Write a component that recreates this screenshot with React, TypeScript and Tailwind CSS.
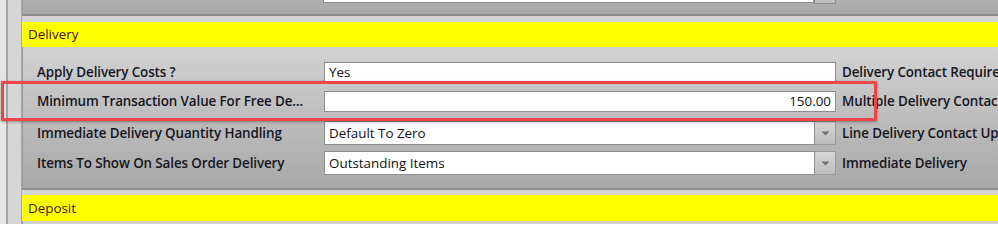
const font = { fontFamily: '"Open Sans", "Noto Sans", sans-serif' };

type Row = {
  label: string;
  value: string;
  right: string;
  align?: "left" | "right";
  dropdown?: boolean;
  h: string;
  mt: string;
};

const rows: Row[] = [
  { label: "Apply Delivery Costs ?", value: "Yes", right: "Delivery Contact Required", h: "h-[21px]", mt: "mt-0" },
  { label: "Minimum Transaction Value For Free De...", value: "150.00", right: "Multiple Delivery Contacts", align: "right", h: "h-[21px]", mt: "mt-[8px]" },
  { label: "Immediate Delivery Quantity Handling", value: "Default To Zero", right: "Line Delivery Contact Update", dropdown: true, h: "h-[24px]", mt: "mt-[9px]" },
  { label: "Items To Show On Sales Order Delivery", value: "Outstanding Items", right: "Immediate Delivery", dropdown: true, h: "h-[24px]", mt: "mt-[6px]" },
];

function DropButton({ className = "" }: { className?: string }) {
  return (
    <div
      className={`flex w-[21px] shrink-0 items-center justify-center border border-[#9a9a9a] bg-gradient-to-b from-[#d6d6d6] to-[#bdbdbd] ${className}`}
    >
      <svg width="9" height="5" viewBox="0 0 9 5">
        <path d="M0.5 0.5 L8.5 0.5 L4.5 4.5 Z" fill="#707070" />
      </svg>
    </div>
  );
}

function FieldRow({ row }: { row: Row }) {
  return (
    <div className={`flex items-center ${row.h} ${row.mt}`}>
      <div className="w-[301px] shrink-0 pl-[14px] text-[13.4px] font-semibold tracking-[-0.1px] whitespace-nowrap text-[#15151f]">
        {row.label}
      </div>
      <div className="flex h-full w-[512px] shrink-0">
        <div
          className={`flex h-full flex-1 items-center border border-[#8e8e8e] bg-white px-[4px] text-[13.4px] text-[#111] ${
            row.align === "right" ? "justify-end" : ""
          }`}
        >
          {row.value}
        </div>
        {row.dropdown && <DropButton className="border-l-0" />}
      </div>
      <div className="pl-[6px] text-[13.4px] font-semibold tracking-[-0.1px] whitespace-nowrap text-[#15151f]">
        {row.right}
      </div>
    </div>
  );
}

export default function App() {
  return (
    <div className="relative flex h-[224px] w-[998px] overflow-hidden bg-[#d4d4d4]" style={font}>
      {/* outer frame edge */}
      <div className="w-[8px] shrink-0 border-r-2 border-[#a2a2a2] bg-[#e6e6e6]" />
      <div className="w-[14px] shrink-0 border-r border-[#a8a8a8] bg-[#d6d6d6]" />

      <div className="flex min-w-0 flex-1 flex-col">
        {/* previous section tail */}
        <div className="flex h-[16px] shrink-0 border-b-2 border-b-[#8c8c8c] border-l border-l-[#9a9a9a] bg-gradient-to-b from-[#b0b0b0] to-[#a6a6a6]">
          <div className="ml-[300px] h-[3px] w-[491px] border-x border-b border-[#8e8e8e] bg-white" />
          <div className="h-[4px] w-[22px] border-x border-b border-[#8e8e8e] bg-[#bdbdbd]" />
        </div>

        <div className="h-[6px] shrink-0" />

        {/* Delivery header */}
        <div className="flex h-[25px] shrink-0 items-center bg-[#ffff00] pl-[6px] text-[13.4px] text-[#4a1010]">
          Delivery
        </div>

        {/* Delivery panel */}
        <div className="flex h-[143px] shrink-0 flex-col border-b-2 border-b-[#8e8e8e] border-l border-l-[#9a9a9a] bg-gradient-to-b from-[#d2d2d2] via-[#bdbdbd] to-[#a8a8a8] pt-[15px]">
          {rows.map((row) => (
            <FieldRow key={row.label} row={row} />
          ))}
        </div>

        <div className="h-[5px] shrink-0" />

        {/* Deposit header */}
        <div className="flex h-[26px] shrink-0 items-center bg-[#ffff00] pl-[6px] text-[13.4px] text-[#4a1010]">
          Deposit
        </div>
        <div className="flex-1 border-l border-l-[#9a9a9a] bg-[#d0d0d0]" />
      </div>

      {/* highlight box */}
      <div className="pointer-events-none absolute top-[81px] left-[1px] h-[40px] w-[876px] rounded-[1px] border-[3px] border-[#ec4448] shadow-[0_1px_3px_rgba(0,0,0,0.35)]" />
    </div>
  );
}
